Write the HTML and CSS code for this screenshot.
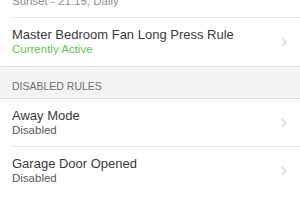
FILE: index.html
```html
<!DOCTYPE html>
<html>
<head>
<meta charset="utf-8">
<link rel="stylesheet" href="styles.css">
</head>
<body>
<div class="page">
  <div class="group">
    <div class="cell inset">
      <div class="text">
        <div class="title">Sunset Lights</div>
        <div class="sub muted">Sunset - 21:15, Daily</div>
      </div>
      <svg class="chev" width="6" height="10" viewBox="0 0 6 10"><polyline points="0.8,0.8 5,5 0.8,9.2" fill="none" stroke="#cfcfd3" stroke-width="1.2"/></svg>
    </div>
    <div class="cell end">
      <div class="text">
        <div class="title">Master Bedroom Fan Long Press Rule</div>
        <div class="sub active">Currently Active</div>
      </div>
      <svg class="chev" width="6" height="10" viewBox="0 0 6 10"><polyline points="0.8,0.8 5,5 0.8,9.2" fill="none" stroke="#cfcfd3" stroke-width="1.2"/></svg>
    </div>
  </div>
  <div class="header">DISABLED RULES</div>
  <div class="group">
    <div class="cell inset">
      <div class="text">
        <div class="title">Away Mode</div>
        <div class="sub">Disabled</div>
      </div>
      <svg class="chev" width="6" height="10" viewBox="0 0 6 10"><polyline points="0.8,0.8 5,5 0.8,9.2" fill="none" stroke="#cfcfd3" stroke-width="1.2"/></svg>
    </div>
    <div class="cell">
      <div class="text">
        <div class="title">Garage Door Opened</div>
        <div class="sub">Disabled</div>
      </div>
      <svg class="chev" width="6" height="10" viewBox="0 0 6 10"><polyline points="0.8,0.8 5,5 0.8,9.2" fill="none" stroke="#cfcfd3" stroke-width="1.2"/></svg>
    </div>
  </div>
</div>
</body>
</html>
```
FILE: styles.css
```css
html, body {
  margin: 0;
  padding: 0;
  background: #ffffff;
  overflow: hidden;
}
body {
  font-family: "Liberation Sans", Arial, sans-serif;
  width: 300px;
  height: 210px;
}
.page {
  margin-top: -30px;
}
.group {
  background: #ffffff;
}
.cell {
  display: flex;
  align-items: center;
  height: 47px;
  padding-left: 12px;
}
.cell.inset {
  background-image: linear-gradient(#e4e4e4, #e4e4e4);
  background-size: calc(100% - 12px) 1px;
  background-position: 12px 100%;
  background-repeat: no-repeat;
  height: 48px;
  box-sizing: border-box;
  padding-bottom: 1px;
}
.cell.end {
  border-bottom: 1px solid #dedede;
  height: 48px;
}
.text {
  flex: 1;
  align-self: flex-start;
  padding-top: 9px;
}
.title {
  font-size: 13px;
  line-height: 16px;
  color: #3a3a3a;
}
.sub {
  font-size: 11.5px;
  line-height: 13px;
  color: #5a5a5a;
}
.sub.muted {
  color: #8e8e8e;
}
.sub.active {
  color: #5cc94a;
}
.chev {
  margin-right: 13px;
  flex: none;
}
.header {
  background: #f3f3f3;
  height: 32px;
  box-sizing: border-box;
  padding: 13px 12px 0;
  font-size: 10.5px;
  line-height: 13px;
  color: #707075;
  border-bottom: 1px solid #dedede;
}
```
